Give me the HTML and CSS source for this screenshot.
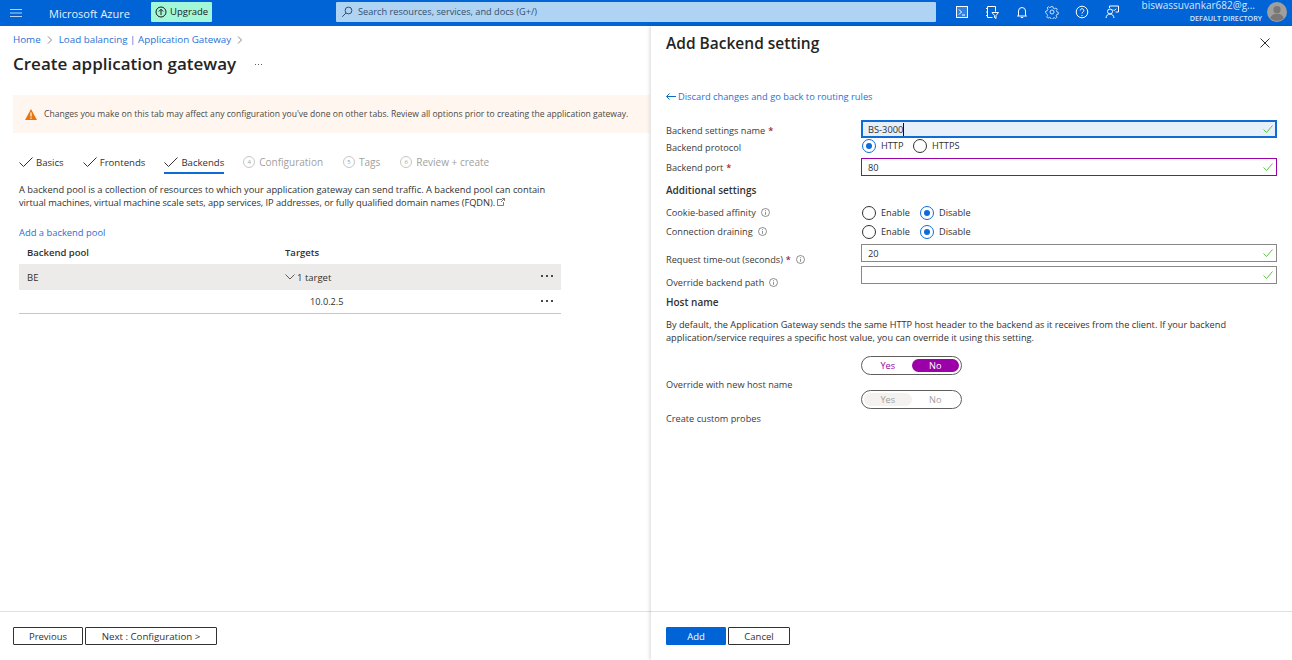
FILE: index.html
```html
<!DOCTYPE html>
<html lang="en">
<head>
<meta charset="utf-8">
<title>Create application gateway</title>
<link rel="stylesheet" href="styles.css">
</head>
<body>
<header class="topbar">
  <svg class="menu" width="12" height="10" viewBox="0 0 12 10"><path d="M0 1.500h12M0 5h12M0 8.500h12" stroke="#b9d4f3" stroke-width="1"/></svg>
  <span class="brand">Microsoft Azure</span>
  <span class="upgrade"><svg width="12" height="12" viewBox="0 0 12 12" fill="none" stroke="#1b1a19"><circle cx="6" cy="6" r="5"/><path d="M6 9V3.500M3.800 5.500 6 3.300l2.200 2.200"/></svg>Upgrade</span>
  <div class="search"><svg width="12" height="12" viewBox="0 0 12 12" fill="none" stroke="#33506e"><circle cx="7.500" cy="4.500" r="3.400"/><path d="M5 7 1.200 10.800"/></svg><span>Search resources, services, and docs (G+/)</span></div>
  <div class="tools">
    <svg width="14" height="14" viewBox="0 0 14 14" fill="none" stroke="#fff"><rect x="1.500" y="1.500" width="11" height="11" fill="#2f82e0"/><path d="M4 4.500 6.500 7 4 9.500M7 10h3"/></svg>
    <svg width="14" height="14" viewBox="0 0 14 14" fill="none" stroke="#fff"><path d="M1 3.500h2M1 7h2M1 10.500h2M2.500 1.500h8v5M2.500 1.500v11h5M7 7.500h6.500l-2.500 3v3l-1.500-1v-2z"/></svg>
    <svg width="14" height="14" viewBox="0 0 14 14" fill="none" stroke="#fff"><path d="M3.500 10.500V6a3.500 3.500 0 0 1 7 0v4.500l1 .5h-9zM5.800 12.500h2.400"/></svg>
    <svg width="14" height="14" viewBox="0 0 14 14" fill="none" stroke="#d5e6fa"><circle cx="7" cy="7" r="2"/><path d="M6 1h2l.4 1.800 1.600.7 1.500-1 1.400 1.400-1 1.500.7 1.600 1.400.4v2l-1.800.4-.7 1.600 1 1.500-1.400 1.400-1.500-1-1.600.7-.4 1.400H6l-.4-1.800-1.600-.7-1.500 1-1.400-1.400 1-1.500-.7-1.600L0 8V6l1.800-.4.7-1.600-1-1.500 1.400-1.400 1.500 1 1.600-.7z" transform="translate(.7 .7) scale(.9)"/></svg>
    <svg width="14" height="14" viewBox="0 0 14 14" fill="none" stroke="#fff"><circle cx="7" cy="7" r="5.800"/><path d="M5.200 5.500a1.800 1.800 0 1 1 2.800 1.500c-.7.400-1 .8-1 1.500M7 10v1"/></svg>
    <svg width="14" height="14" viewBox="0 0 14 14" fill="none" stroke="#fff"><path d="M4.500 3V1h9v6h-3"/><circle cx="5" cy="6.500" r="2.500"/><path d="M1 13c.3-2.500 1.800-4 4-4s3.700 1.500 4 4M8 4.500l1.200 1.200 2-2"/></svg>
  </div>
  <div class="account"><span class="email">biswassuvankar682@g...</span><span class="dir">DEFAULT DIRECTORY</span></div>
  <svg class="avatar" width="20" height="20" viewBox="0 0 22 22"><circle cx="11" cy="11" r="11" fill="#a19f9d"/><circle cx="11" cy="8.500" r="4" fill="#7a7876"/><path d="M3.500 18c1-3.500 4-5 7.500-5s6.500 1.500 7.500 5a11 11 0 0 1-15 0z" fill="#7a7876"/></svg>
</header>

<div class="workspace">
  <main class="blade">
    <div class="blade-body">
      <nav class="crumbs"><a>Home</a><svg class="sep" width="6" height="8" viewBox="0 0 6 8"><path d="M1 .5 4.500 4 1 7.500" fill="none" stroke="#8a8886"/></svg><a>Load balancing | Application Gateway</a><svg class="sep" width="6" height="8" viewBox="0 0 6 8"><path d="M1 .5 4.500 4 1 7.500" fill="none" stroke="#8a8886"/></svg></nav>
      <div class="title-row"><h1>Create application gateway</h1><span class="more-h"><i></i><i></i><i></i></span></div>
      <div class="banner">
        <svg width="12" height="11" viewBox="0 0 12 11"><path d="M6 0 12 11H0z" fill="#e8750f"/><path d="M6 3.500v4M6 8.500v1.200" stroke="#fff" stroke-width="1.200"/></svg>
        <span>Changes you make on this tab may affect any configuration you've done on other tabs. Review all options prior to creating the application gateway.</span>
      </div>
      <div class="tabs">
        <span class="tab done"><svg width="14" height="10" viewBox="0 0 14 10"><path d="M.5 5.500 4.500 9.500 13.500.5" fill="none" stroke="#323130"/></svg>Basics</span>
        <span class="tab done"><svg width="14" height="10" viewBox="0 0 14 10"><path d="M.5 5.500 4.500 9.500 13.500.5" fill="none" stroke="#323130"/></svg>Frontends</span>
        <span class="tab done active"><svg width="14" height="10" viewBox="0 0 14 10"><path d="M.5 5.500 4.500 9.500 13.500.5" fill="none" stroke="#323130"/></svg>Backends</span>
        <span class="tab off"><i class="num">4</i>Configuration</span>
        <span class="tab off"><i class="num">5</i>Tags</span>
        <span class="tab off"><i class="num">6</i>Review + create</span>
      </div>
      <p class="intro">A backend pool is a collection of resources to which your application gateway can send traffic. A backend pool can contain <span class="tight">virtual machines, virtual machine scale sets, app services, IP addresses, or fully qualified domain names (FQDN).</span> <svg width="8" height="8" viewBox="0 0 8 8" fill="none" stroke="#605e5c" stroke-width=".8"><path d="M5 1.500H.5v6h6V4M4 4l3.500-3.500M5 .5h2.500V3"/></svg></p>
      <a class="add-link">Add a backend pool</a>
      <div class="table">
        <div class="t-row t-head"><span class="c1">Backend pool</span><span class="c2">Targets</span></div>
        <div class="t-row t-sel"><span class="c1">BE</span><span class="c2"><svg width="10" height="6" viewBox="0 0 10 6"><path d="M.5.500 5 5 9.500.500" fill="none" stroke="#605e5c"/></svg>1 target</span><span class="dots"><i></i><i></i><i></i></span></div>
        <div class="t-row t-sub"><span class="c1"></span><span class="c2 ip">10.0.2.5</span><span class="dots"><i></i><i></i><i></i></span></div>
      </div>
    </div>
    <footer class="foot">
      <button class="btn prev">Previous</button>
      <button class="btn next">Next : Configuration &gt;</button>
    </footer>
  </main>

  <aside class="panel">
    <div class="panel-body">
      <div class="panel-head"><h2>Add Backend setting</h2><svg width="10" height="10" viewBox="0 0 10 10"><path d="M.5.500l9 9M9.500.500l-9 9" stroke="#323130"/></svg></div>
      <a class="back"><svg width="11" height="7" viewBox="0 0 11 7"><path d="M10 3.500H1M3.500.500l-3 3 3 3" fill="none" stroke="#0f6cbd"/></svg>Discard changes and go back to routing rules</a>

      <div class="row h18"><label class="lab l-name">Backend settings name <b>*</b></label><div class="input focus"><span>BS-3000</span><i class="caret"></i><svg class="ok" width="10" height="8" viewBox="0 0 10 8"><path d="M.5 4.500 3.500 7.500 9.500.5" fill="none" stroke="#57c83f"/></svg></div></div>
      <div class="row h20"><label class="lab l-proto">Backend protocol</label><div class="radios r-proto"><span class="radio on"></span><span class="r-text">HTTP</span><span class="radio"></span><span class="r-text">HTTPS</span></div></div>
      <div class="row h18"><label class="lab l-port">Backend port <b>*</b></label><div class="input edited"><span>80</span><svg class="ok" width="10" height="8" viewBox="0 0 10 8"><path d="M.5 4.500 3.500 7.500 9.500.5" fill="none" stroke="#57c83f"/></svg></div></div>
      <h3 class="sub add">Additional settings</h3>
      <div class="row h19"><label class="lab">Cookie-based affinity <svg class="info" width="9" height="9" viewBox="0 0 9 9" fill="none" stroke="#605e5c" stroke-width=".7"><circle cx="4.500" cy="4.500" r="4"/><path d="M4.500 4v2.800M4.500 2.200v1"/></svg></label><div class="radios"><span class="radio"></span><span class="r-text">Enable</span><span class="radio on"></span><span class="r-text">Disable</span></div></div>
      <div class="row h19"><label class="lab">Connection draining <svg class="info" width="9" height="9" viewBox="0 0 9 9" fill="none" stroke="#605e5c" stroke-width=".7"><circle cx="4.500" cy="4.500" r="4"/><path d="M4.500 4v2.800M4.500 2.200v1"/></svg></label><div class="radios"><span class="radio"></span><span class="r-text">Enable</span><span class="radio on"></span><span class="r-text">Disable</span></div></div>
      <div class="row h18 gap3"><label class="lab l-req">Request time-out (seconds) <b>*</b> <svg class="info" width="9" height="9" viewBox="0 0 9 9" fill="none" stroke="#605e5c" stroke-width=".7"><circle cx="4.500" cy="4.500" r="4"/><path d="M4.500 4v2.800M4.500 2.200v1"/></svg></label><div class="input"><span>20</span><svg class="ok" width="10" height="8" viewBox="0 0 10 8"><path d="M.5 4.500 3.500 7.500 9.500.5" fill="none" stroke="#57c83f"/></svg></div></div>
      <div class="row h18 gap4"><label class="lab l-time">Override backend path <svg class="info" width="9" height="9" viewBox="0 0 9 9" fill="none" stroke="#605e5c" stroke-width=".7"><circle cx="4.500" cy="4.500" r="4"/><path d="M4.500 4v2.800M4.500 2.200v1"/></svg></label><div class="input"><svg class="ok" width="10" height="8" viewBox="0 0 10 8"><path d="M.5 4.500 3.500 7.500 9.500.5" fill="none" stroke="#57c83f"/></svg></div></div>
      <h3 class="sub host">Host name</h3>
      <p class="host-text">By default, the Application Gateway sends the same HTTP host header to the backend as it receives from the client. If your backend application/service requires a specific host value, you can override it using this setting.</p>
      <div class="row toggle-row"><label class="lab l-toggle">Override with new host name</label><div class="toggle"><span class="opt yes">Yes</span><span class="opt no sel">No</span></div></div>
      <div class="row toggle-row t2"><label class="lab l-toggle">Create custom probes</label><div class="toggle dis"><span class="opt yes sel">Yes</span><span class="opt no">No</span></div></div>
    </div>
    <footer class="foot panel-foot">
      <button class="btn primary">Add</button>
      <button class="btn cancel">Cancel</button>
    </footer>
  </aside>
</div>
</body>
</html>
```
FILE: styles.css
```css
* { box-sizing: border-box; }
html, body { margin: 0; height: 100%; }
body { width: 1292px; height: 660px; overflow: hidden; display: flex; flex-direction: column; font-family: "Open Sans", "Noto Sans", sans-serif; font-size: 9px; color: #323130; background: #fff; }
a { color: #2a6fd6; }
h1, h2, h3, p { margin: 0; }

.topbar { height: 26px; flex: none; background: #0063d6; display: flex; align-items: center; color: #fff; }
.menu { margin-left: 10px; }
.brand { margin-left: 27px; font-size: 11px; font-weight: 500; color: #e6f0fc; width: 102px; white-space: nowrap; }
.upgrade { width: 61px; height: 20px; background: #a3f7d9; border-radius: 1px; display: flex; align-items: center; gap: 3px; padding-left: 4px; color: #1b1a19; font-size: 9.500px; font-weight: 500; margin-top: -3px; }
.search { margin-left: 124px; width: 600px; height: 20px; margin-top: -3px; background: #afd3f3; border-radius: 1px; display: flex; align-items: center; gap: 5px; padding-left: 5px; color: #33506e; font-size: 9.200px; }
.tools { margin-left: 19px; display: flex; gap: 16px; margin-top: -3px; }
.account { margin-left: 21px; width: 122px; display: flex; flex-direction: column; align-items: flex-end; line-height: 11px; margin-top: -2px; }
.email { font-size: 10px; color: #d5e6fa; white-space: nowrap; margin-right: 7px; }
.dir { font-size: 7.200px; font-weight: 600; color: #d5e6fa; margin-top: 2px; }
.avatar { margin-left: 5px; margin-top: -3px; }

.workspace { flex: 1; display: flex; min-height: 0; }
.blade { width: 651px; flex: none; display: flex; flex-direction: column; }
.blade-body { flex: 1; }
.foot { height: 49px; flex: none; border-top: 1px solid #e1dfdd; display: flex; gap: 2px; padding: 15px 0 0 13px; }
.btn { height: 18px; background: #fff; border: 1px solid #323130; border-radius: 1px; font: 500 9.500px "Open Sans", sans-serif; color: #323130; padding: 0; }
.prev { width: 70px; }
.next { width: 132px; font-size: 9.700px; }
.primary { width: 60px; background: #0063d6; border-color: #0063d6; color: #fff; }
.cancel { width: 62px; }

.crumbs { margin: 7px 0 0 13px; height: 13px; display: flex; align-items: center; font-size: 9.800px; white-space: nowrap; }
.sep { margin: 0 6px; }
.title-row { margin: 5px 0 0 13px; height: 24px; display: flex; align-items: center; }
h1 { font-size: 17px; font-weight: 600; color: #252423; white-space: nowrap; }
.more-h { margin: 2px 0 0 19px; display: flex; gap: 2px; }
.more-h i { width: 1px; height: 1px; background: #605e5c; }
.banner { margin: 20px 0 0 13px; height: 38px; width: 637px; background: #fff7ef; display: flex; align-items: center; gap: 7px; padding-left: 12px; font-size: 8.570px; white-space: nowrap; color: #4a4846; }
.tabs { margin: 20px 0 0 19px; height: 21px; display: flex; align-items: flex-start; font-size: 9.600px; white-space: nowrap; }
.tab { display: flex; align-items: center; gap: 3px; height: 21px; margin-right: 19px; padding-bottom: 3px; }
.tab.active { font-weight: 500; border-bottom: 2px solid #0f6cd6; padding-bottom: 1px; margin-right: 19px; }
.tab.off { color: #a19f9d; margin-right: 20px; font-size: 10px; gap: 4px; }
.num { width: 12px; height: 12px; border: 1px solid #c8c6c4; border-radius: 50%; font: 6px/10px "Open Sans", sans-serif; text-align: center; }
.intro { margin: 9px 0 0 19px; width: 540px; line-height: 13px; font-size: 9.300px; color: #323130; }
.tight { letter-spacing: -.06px; }
.add-link { display: block; margin: 17px 0 0 19px; font-size: 9.400px; line-height: 13px; }
.table { margin: 3px 0 0 19px; width: 542px; border-bottom: 1px solid #c8c6c4; }
.t-row { display: flex; align-items: center; position: relative; font-size: 9.500px; }
.t-head { height: 22px; padding-bottom: 2px; font-weight: 600; }
.t-sel { height: 26px; background: #edebe9; }
.t-sub { height: 23px; }
.c1 { width: 266px; padding-left: 8px; }
.c2 { display: flex; align-items: center; gap: 2px; }
.ip { padding-left: 25px; font-size: 9.200px; }
.dots { margin-left: auto; margin-right: 8px; display: flex; gap: 3px; margin-top: -2px; }
.dots i { width: 2px; height: 2px; background: #4a4846; }

.panel { flex: 1; display: flex; flex-direction: column; box-shadow: -1px 0 4px rgba(0,0,0,.16); background: #fff; position: relative; }
.panel-body { flex: 1; padding-left: 15px; }
.panel-foot { padding-left: 15px; }
.panel-head { height: 34px; padding: 0 21px 0 0; display: flex; justify-content: space-between; align-items: center; }
h2 { font-size: 15.500px; font-weight: 600; color: #252423; white-space: nowrap; }
.panel-head svg { margin-right: 1px; }
.back { margin-top: 30px; display: flex; align-items: center; gap: 1px; height: 13px; font-size: 9.300px; white-space: nowrap; }
.row { display: flex; align-items: center; }
.h18 { height: 18px; }
.h19 { height: 19px; }
.h20 { height: 20px; }
.back + .row { margin-top: 17px; }
.gap3 { margin-top: 3px; }
.gap4 { margin-top: 4px; }
.lab { width: 195px; flex: none; font-size: 9.200px; color: #3b3a39; white-space: nowrap; display: flex; align-items: center; gap: 5px; }
.lab b { color: #a4262c; margin-left: -2px; font-weight: 600; }
.l-name { margin-top: 2px; }
.l-proto { margin-top: -2px; }
.l-port { margin-top: 1px; }
.l-time { margin-top: 15px; height: 18px; }
.l-req { margin-top: 12px; height: 18px; }
.input { width: 416px; height: 18px; flex: none; border: 1px solid #8a8886; display: flex; align-items: center; padding: 0 3px 0 6px; font-size: 9.300px; position: relative; }
.input.focus { border: 2px solid #0f6cd6; background: #e7effb; padding: 0 2px 0 5px; }
.input.edited { border-color: #9c00a8; }
.caret { width: 1px; height: 13px; background: #111; }
.ok { margin-left: auto; }
.radios { display: flex; align-items: center; margin-top: -5px; font-size: 9.200px; margin-left: 1px; }
.h19 .radios { margin-top: 0; }
.radio { width: 14px; height: 14px; border: 1px solid #323130; border-radius: 50%; background: #fff; position: relative; flex: none; }
.radio.on { border-color: #0f6cd6; }
.radio.on::after { content: ""; position: absolute; inset: 3px; border-radius: 50%; background: #0f6cd6; }
.r-text { margin: 0 6px 0 5px; width: 33px; }
.r-proto .r-text { width: 26px; margin-right: 6px; }
.sub { font-size: 10px; font-weight: 600; color: #323130; }
.add { margin-top: 7px; height: 20px; line-height: 14px; }
.host { margin-top: 11px; height: 14px; line-height: 14px; }
.host-text { margin-top: 9px; width: 600px; line-height: 13px; font-size: 9.200px; }
.toggle-row { height: 19px; position: relative; }
.host-text + .toggle-row { margin-top: 12px; }
.t2 { margin-top: 15px; }
.l-toggle { margin-top: 38px; }
.toggle { width: 101px; height: 19px; flex: none; border: 1px solid #605e5c; border-radius: 10px; display: flex; padding: 2px; font-size: 9.200px; }
.opt { flex: 1; border-radius: 8px; display: flex; align-items: center; justify-content: center; color: #9c00a8; }
.opt.sel { background: #9c00a8; color: #fff; }
.dis .opt { color: #a19f9d; }
.dis .opt.sel { background: #f3f2f1; color: #a19f9d; }
```
